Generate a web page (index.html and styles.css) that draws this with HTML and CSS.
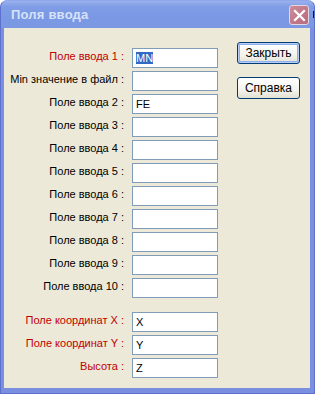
FILE: index.html
```html
<!DOCTYPE html>
<html>
<head>
<meta charset="utf-8">
<link rel="stylesheet" href="styles.css">
</head>
<body>
<div class="window">
  <div class="titlebar">
    <span class="title">Поля ввода</span>
    <span class="close"><svg width="13" height="13" viewBox="0 0 13 13"><path d="M2 2 L11 11 M11 2 L2 11" stroke="#fff" stroke-width="2.2" stroke-linecap="square"/></svg></span>
    <span class="tick"></span>
  </div>
  <div class="client">
    <div class="form">
      <div class="fields">
        <div class="row"><label class="red">Поле ввода 1 :</label><div class="input"><span class="sel">MN</span></div></div>
        <div class="row"><label>Min значение в файл :</label><div class="input"></div></div>
        <div class="row"><label>Поле ввода 2 :</label><div class="input">FE</div></div>
        <div class="row"><label>Поле ввода 3 :</label><div class="input"></div></div>
        <div class="row"><label>Поле ввода 4 :</label><div class="input"></div></div>
        <div class="row"><label>Поле ввода 5 :</label><div class="input"></div></div>
        <div class="row"><label>Поле ввода 6 :</label><div class="input"></div></div>
        <div class="row"><label>Поле ввода 7 :</label><div class="input"></div></div>
        <div class="row"><label>Поле ввода 8 :</label><div class="input"></div></div>
        <div class="row"><label>Поле ввода 9 :</label><div class="input"></div></div>
        <div class="row"><label>Поле ввода 10 :</label><div class="input"></div></div>
        <div class="row coords"><label class="red">Поле координат X :</label><div class="input">X</div></div>
        <div class="row"><label class="red">Поле координат Y :</label><div class="input">Y</div></div>
        <div class="row"><label class="red">Высота :</label><div class="input">Z</div></div>
      </div>
      <div class="buttons">
        <div class="btn focus">Закрыть</div>
        <div class="btn">Справка</div>
      </div>
    </div>
  </div>
</div>
</body>
</html>
```

FILE: styles.css
```css
html, body {
  margin: 0;
  padding: 0;
  background: #ffffff;
}
body {
  font-family: "Liberation Sans", Arial, sans-serif;
  font-size: 11px;
  color: #000;
}
.window {
  width: 315px;
  height: 394px;
  box-sizing: border-box;
  background: #7a8fe0;
  border-radius: 7px 7px 0 0;
  border: 1px solid #5d70cc;
  border-top-color: #8fa6ea;
  display: flex;
  flex-direction: column;
  overflow: hidden;
}
.titlebar {
  height: 27px;
  flex: none;
  position: relative;
  background: linear-gradient(#9ab2ee 0%, #809de6 20%, #7a98e4 60%, #7c98e3 100%);
  display: flex;
  align-items: center;
}
.title {
  margin-left: 10px;
  margin-top: -1px;
  font-weight: bold;
  font-size: 13px;
  color: #d6e2f8;
  letter-spacing: 0.2px;
}
.close {
  position: absolute;
  left: 288px;
  top: 4px;
  width: 18px;
  height: 18px;
  border: 1px solid #e6d6e2;
  border-radius: 3px;
  background: linear-gradient(135deg, #cc8c9a, #b86a7c);
  display: flex;
  align-items: center;
  justify-content: center;
}
.tick {
  position: absolute;
  left: 312px;
  top: 10px;
  width: 1px;
  height: 7px;
  background: #111;
}
.client {
  flex: 1;
  margin: 0 4px 5px 3px;
  background: #ece9d8;
}
.form {
  display: flex;
  padding-top: 20px;
}
.fields {
  display: flex;
  flex-direction: column;
  gap: 3px;
}
.row {
  display: flex;
  align-items: center;
  height: 20px;
}
.row.coords {
  margin-top: 11px;
}
.row label {
  width: 120px;
  text-align: right;
  white-space: nowrap;
  padding-bottom: 4px;
}
.row label.red {
  color: #c00000;
}
.input {
  margin-left: 8px;
  width: 86px;
  height: 20px;
  box-sizing: border-box;
  border: 1px solid #7f9db9;
  background: #fff;
  padding-left: 3px;
  display: flex;
  align-items: center;
}
.sel {
  background: #316ac5;
  color: #fff;
}
.buttons {
  margin-left: 19px;
  margin-top: -6px;
  display: flex;
  flex-direction: column;
  gap: 13px;
}
.btn {
  width: 63px;
  height: 22px;
  box-sizing: border-box;
  border: 1px solid #003c74;
  border-radius: 3px;
  background: linear-gradient(#ffffff, #f4f3ee 60%, #e3e0d2);
  display: flex;
  align-items: center;
  justify-content: center;
  font-size: 12px;
}
.btn.focus {
  box-shadow: inset 0 0 0 1px #b7cdf5, inset 0 0 0 2px #8cb0ee;
}
```
